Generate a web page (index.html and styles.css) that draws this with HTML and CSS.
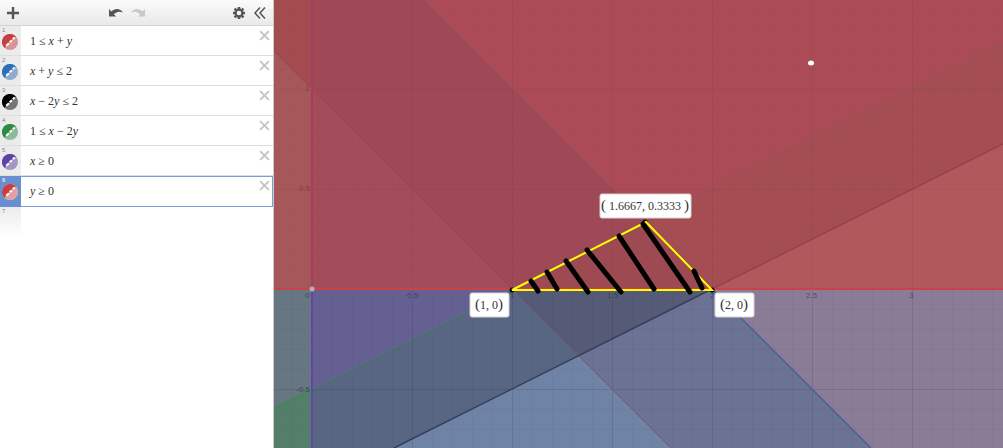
FILE: index.html
```html
<!DOCTYPE html>
<html lang="en">
<head>
<meta charset="utf-8">
<meta name="viewport" content="width=device-width, initial-scale=1">
<title>Graphing Calculator</title>
<link rel="stylesheet" href="styles.css">
</head>
<body>
<svg class="defs" aria-hidden="true">
  <symbol id="inequality" viewBox="0 0 16 16">
    <circle cx="8" cy="8" r="8" fill="currentColor" opacity=".5"/>
    <path d="M2.3 13.7A8 8 0 0 1 13.7 2.3Z" fill="currentColor"/>
    <path d="M4.200 11.800 7 9.200M7.600 8.200 10 6.200M10.800 5.200 12.600 3.600" stroke="#fff" stroke-width="2"/>
  </symbol>
  <symbol id="close" viewBox="0 0 10 10">
    <path d="M1 1 9 9M9 1 1 9" stroke="#c6c6c6" stroke-width="1.8" fill="none"/>
  </symbol>
  <symbol id="arrow" viewBox="0 0 14 9">
    <path d="M0 1V8.500H7L4.900 6.300C7.200 3.600 10.800 2.800 14 4.600 11.600 0 5.600-.3 2.300 3.500Z" fill="currentColor"/>
  </symbol>
</svg>
<div class="app">
  <aside class="panel">
    <header class="toolbar">
      <button class="tool" aria-label="Add item"><svg width="12" height="12" viewBox="0 0 12 12"><path d="M6 0V12M0 6H12" stroke="#555" stroke-width="2.4"/></svg></button>
      <div class="history">
        <button class="tool" aria-label="Undo"><svg width="14" height="9"><use href="#arrow"/></svg></button>
        <button class="tool redo" aria-label="Redo"><svg width="14" height="9"><use href="#arrow"/></svg></button>
      </div>
      <div class="options">
        <button class="tool" aria-label="Edit list"><svg width="12" height="12" viewBox="-6 -6 12 12"><circle r="3.400" fill="none" stroke="#555" stroke-width="2.200"/><path d="M0-6V-4M0 6V4M-6 0H-4M6 0H4M-4.400-4.400-3-3M4.400 4.400 3 3M-4.400 4.400-3 3M4.400-4.400 3-3" stroke="#555" stroke-width="2.600"/></svg></button>
        <button class="tool" aria-label="Hide list"><svg width="12" height="12" viewBox="0 0 12 12"><path d="M6 .5 1 6 6 11.5M11 .5 6 6 11 11.5" fill="none" stroke="#555" stroke-width="1.5"/></svg></button>
      </div>
    </header>
    <ol class="list">
      <li class="row"><div class="gutter"><span class="num">1</span><button class="mark red" aria-label="Toggle expression 1"><svg><use href="#inequality"/></svg></button></div><div class="math">1 ≤ <i>x</i> + <i>y</i></div><button class="close" aria-label="Delete expression 1"><svg><use href="#close"/></svg></button></li>
      <li class="row"><div class="gutter"><span class="num">2</span><button class="mark blue" aria-label="Toggle expression 2"><svg><use href="#inequality"/></svg></button></div><div class="math"><i>x</i> + <i>y</i> ≤ 2</div><button class="close" aria-label="Delete expression 2"><svg><use href="#close"/></svg></button></li>
      <li class="row"><div class="gutter"><span class="num">3</span><button class="mark black" aria-label="Toggle expression 3"><svg><use href="#inequality"/></svg></button></div><div class="math"><i>x</i> − 2<i>y</i> ≤ 2</div><button class="close" aria-label="Delete expression 3"><svg><use href="#close"/></svg></button></li>
      <li class="row"><div class="gutter"><span class="num">4</span><button class="mark green" aria-label="Toggle expression 4"><svg><use href="#inequality"/></svg></button></div><div class="math">1 ≤ <i>x</i> − 2<i>y</i></div><button class="close" aria-label="Delete expression 4"><svg><use href="#close"/></svg></button></li>
      <li class="row"><div class="gutter"><span class="num">5</span><button class="mark purple" aria-label="Toggle expression 5"><svg><use href="#inequality"/></svg></button></div><div class="math"><i>x</i> ≥ 0</div><button class="close" aria-label="Delete expression 5"><svg><use href="#close"/></svg></button></li>
      <li class="row selected"><div class="gutter"><span class="num">6</span><button class="mark red" aria-label="Toggle expression 6"><svg><use href="#inequality"/></svg></button></div><div class="math"><i>y</i> ≥ 0</div><button class="close" aria-label="Delete expression 6"><svg><use href="#close"/></svg></button></li>
      <li class="row next"><div class="gutter"><span class="num">7</span></div></li>
    </ol>
  </aside>
  <main class="graph">
    <!-- Origin at (0,0); one unit is 200 -->
    <svg class="plane" viewBox="-38 -289 729 448" preserveAspectRatio="xMinYMin slice" role="img" aria-label="Graph of the inequalities">
      <defs>
        <pattern id="minor" width="20" height="20" patternUnits="userSpaceOnUse"><path d="M.5 0V20M0 .5H20" stroke="#302040" stroke-opacity=".045"/></pattern>
        <pattern id="major" width="100" height="100" patternUnits="userSpaceOnUse"><path d="M.5 0V100M0 .5H100" stroke="#302040" stroke-opacity=".12"/></pattern>
      </defs>
      <g shape-rendering="crispEdges">
        <path fill="#aa4b55" d="M-38-289H691V0H-38Z"/>
        <path fill="#a34c4f" d="M-38-289H0V-200L-38-238Z"/>
        <path fill="#a65759" d="M-38-238 0-200V0H-38Z"/>
        <path fill="#a34c5c" d="M0-200 200 0H0Z"/>
        <path fill="#9f4856" d="M0-289H111L333-67 200 0 0-200Z"/>
        <path fill="#a44d52" d="M333-67 691-245V-145L400 0Z"/>
        <path fill="#9d4a53" d="M200 0 333-67 400 0Z"/>
        <path fill="#b0585c" d="M400 0 691-145V0Z"/>
        <path fill="#8a7c96" d="M400 0H691V159H559Z"/>
        <path fill="#667683" d="M-38 0H0V100L-38 119Z"/>
        <path fill="#547e69" d="M-38 119 0 100V159H-38Z"/>
        <path fill="#656092" d="M0 0H200L0 100Z"/>
        <path fill="#586583" d="M0 100 200 0 267 67 82 159H0Z"/>
        <path fill="#555a76" d="M200 0H400L267 67Z"/>
        <path fill="#6f83a6" d="M267 67 359 159H82Z"/>
        <path fill="#6c7294" d="M400 0 559 159H359L267 67Z"/>
      </g>
      <g opacity=".4"><path fill="url(#minor)" d="M-38-289H691V0H-38Z"/><path fill="url(#major)" d="M-38-289H691V0H-38Z"/></g>
      <path fill="url(#minor)" d="M-38 0H691V159H-38Z"/>
      <path fill="url(#major)" d="M-38 0H691V159H-38Z"/>
      <g fill="none">
        <path stroke="#a43c43" d="M-38-238 0-200"/>
        <path stroke="#a43f50" d="M0-200 200 0"/>
        <path stroke="#705774" d="M200 0 359 159"/>
        <path stroke="#8f4863" d="M111-289 333-67"/>
        <path stroke="#456297" stroke-width="1.500" d="M400 0 559 159"/>
        <path stroke="#91565a" d="M333-67 691-245"/>
        <path stroke="#487b70" d="M0 100 200 0"/>
        <path stroke="#3d8953" stroke-width="1.500" d="M-38 119 0 100"/>
        <path stroke="#94424b" stroke-width="1.500" d="M400 0 691-145"/>
        <path stroke="#343e58" stroke-width="1.500" d="M82 159 400 0"/>
        <path stroke="#a53e5d" stroke-width="2" d="M0-289V0"/>
        <path stroke="#6545a4" stroke-width="2" d="M0 0V159"/>
        <path stroke="#cb4145" stroke-width="2" d="M-38 0H691"/>
      </g>
      <g class="ticks">
        <text x="-7" y="9">0</text><text x="95" y="9">0.5</text><text x="198" y="9">1</text><text x="295" y="9">1.5</text><text x="398" y="9">2</text><text x="494" y="9">2.5</text><text x="597" y="9">3</text><text x="-16" y="103">-0.5</text>
        <text class="faint" x="-13" y="-98">0.5</text><text class="faint" x="-7" y="-198">1</text>
      </g>
      <circle cx="0" cy="0" r="2.500" fill="#b8b0b4"/>
      <g fill="#000"><circle cx="200" cy="1" r="2.500"/><circle cx="400" cy="1" r="2.500"/><circle cx="333" cy="-67" r="2.500"/></g>
      <path fill="none" stroke="#ff0" stroke-width="2" d="M200 1 334-67 400 1Z"/>
      <path stroke="#000" stroke-width="5" stroke-linecap="round" d="M219-8 226 2M235-17 245 0M254-28 276 3M275-39 309 3M307-53 342 0M331-65 378 3M382-18 390-1"/>
      <ellipse cx="499" cy="-226" rx="3" ry="2.500" fill="#fff"/>
      <g class="label"><rect x="288" y="-95" width="91" height="24" rx="2"/><text x="333" y="-79"><tspan class="paren">(</tspan> 1.6667, 0.3333 <tspan class="paren">)</tspan></text></g>
      <g class="label"><rect x="158" y="4" width="39" height="24" rx="2"/><text x="177" y="20"><tspan class="paren">(</tspan>1, 0<tspan class="paren">)</tspan></text></g>
      <g class="label"><rect x="403" y="4" width="39" height="24" rx="2"/><text x="422" y="20"><tspan class="paren">(</tspan>2, 0<tspan class="paren">)</tspan></text></g>
    </svg>
  </main>
</div>
</body>
</html>
```
FILE: styles.css
```css
* { box-sizing: border-box; }
body { margin: 0; font-family: "Liberation Sans", Arial, sans-serif; }
button { padding: 0; border: 0; background: none; color: inherit; cursor: pointer; }
svg { display: block; }
.defs { position: absolute; width: 0; height: 0; }
.app { display: flex; height: 100vh; overflow: hidden; }
.panel { flex: none; width: 274px; background: #fff; border-right: 1px solid #c9c9c9; }
.toolbar {
  display: grid; grid-template-columns: 1fr auto 1fr; align-items: center;
  height: 26px; padding: 0 7px; color: #555;
  background: linear-gradient(#fbfbfb, #e9e9e9); border-bottom: 1px solid #d4d4d4;
}
.tool { display: flex; }
.history { display: flex; gap: 8px; padding-right: 20px; }
.options { display: flex; justify-content: flex-end; gap: 9px; }
.redo { color: #c8c8c8; }
.redo svg { transform: scaleX(-1); }
.list { margin: 0; padding: 0; list-style: none; }
.row { display: flex; height: 30px; border-bottom: 1px solid #dedede; }
.gutter { flex: none; display: flex; flex-direction: column; width: 21px; padding-left: 2px; background: #ebebeb; }
.num { height: 8px; padding-top: 1px; font-size: 6px; line-height: 6px; color: #888; }
.mark, .mark svg { width: 16px; height: 16px; }
.red { color: #c7403f; }
.blue { color: #2d70b3; }
.black { color: #000; }
.green { color: #308a43; }
.purple { color: #6042a6; }
.math {
  flex: 1; padding-left: 9px; color: #333;
  font: 12px/31px "Liberation Serif", "Times New Roman", serif;
  word-spacing: normal;
}
.close { align-self: flex-start; padding: 4px 3px; }
.close svg { width: 11px; height: 11px; }
.selected { height: 31px; border: 0; box-shadow: inset 0 0 0 1px #7c9fd8; }
.selected .gutter { background: #6890d0; }
.selected .mark { border-radius: 50%; background: #fff; }
.selected .num { color: #fff; }
.next { border: 0; }
.next .gutter { background: linear-gradient(#ebebeb, #fff); }
.graph { flex: 1; min-width: 0; }
.plane { width: 100%; height: 100%; }
.ticks { font-size: 8px; fill: #28283c; fill-opacity: .6; }
.ticks .faint { fill: #702830; }
.label rect { fill: #fff; stroke: #d9d3d6; }
.label text { font: 12px "Liberation Serif", "Times New Roman", serif; fill: #333; text-anchor: middle; }
.label .paren { font-size: 15px; }
```
